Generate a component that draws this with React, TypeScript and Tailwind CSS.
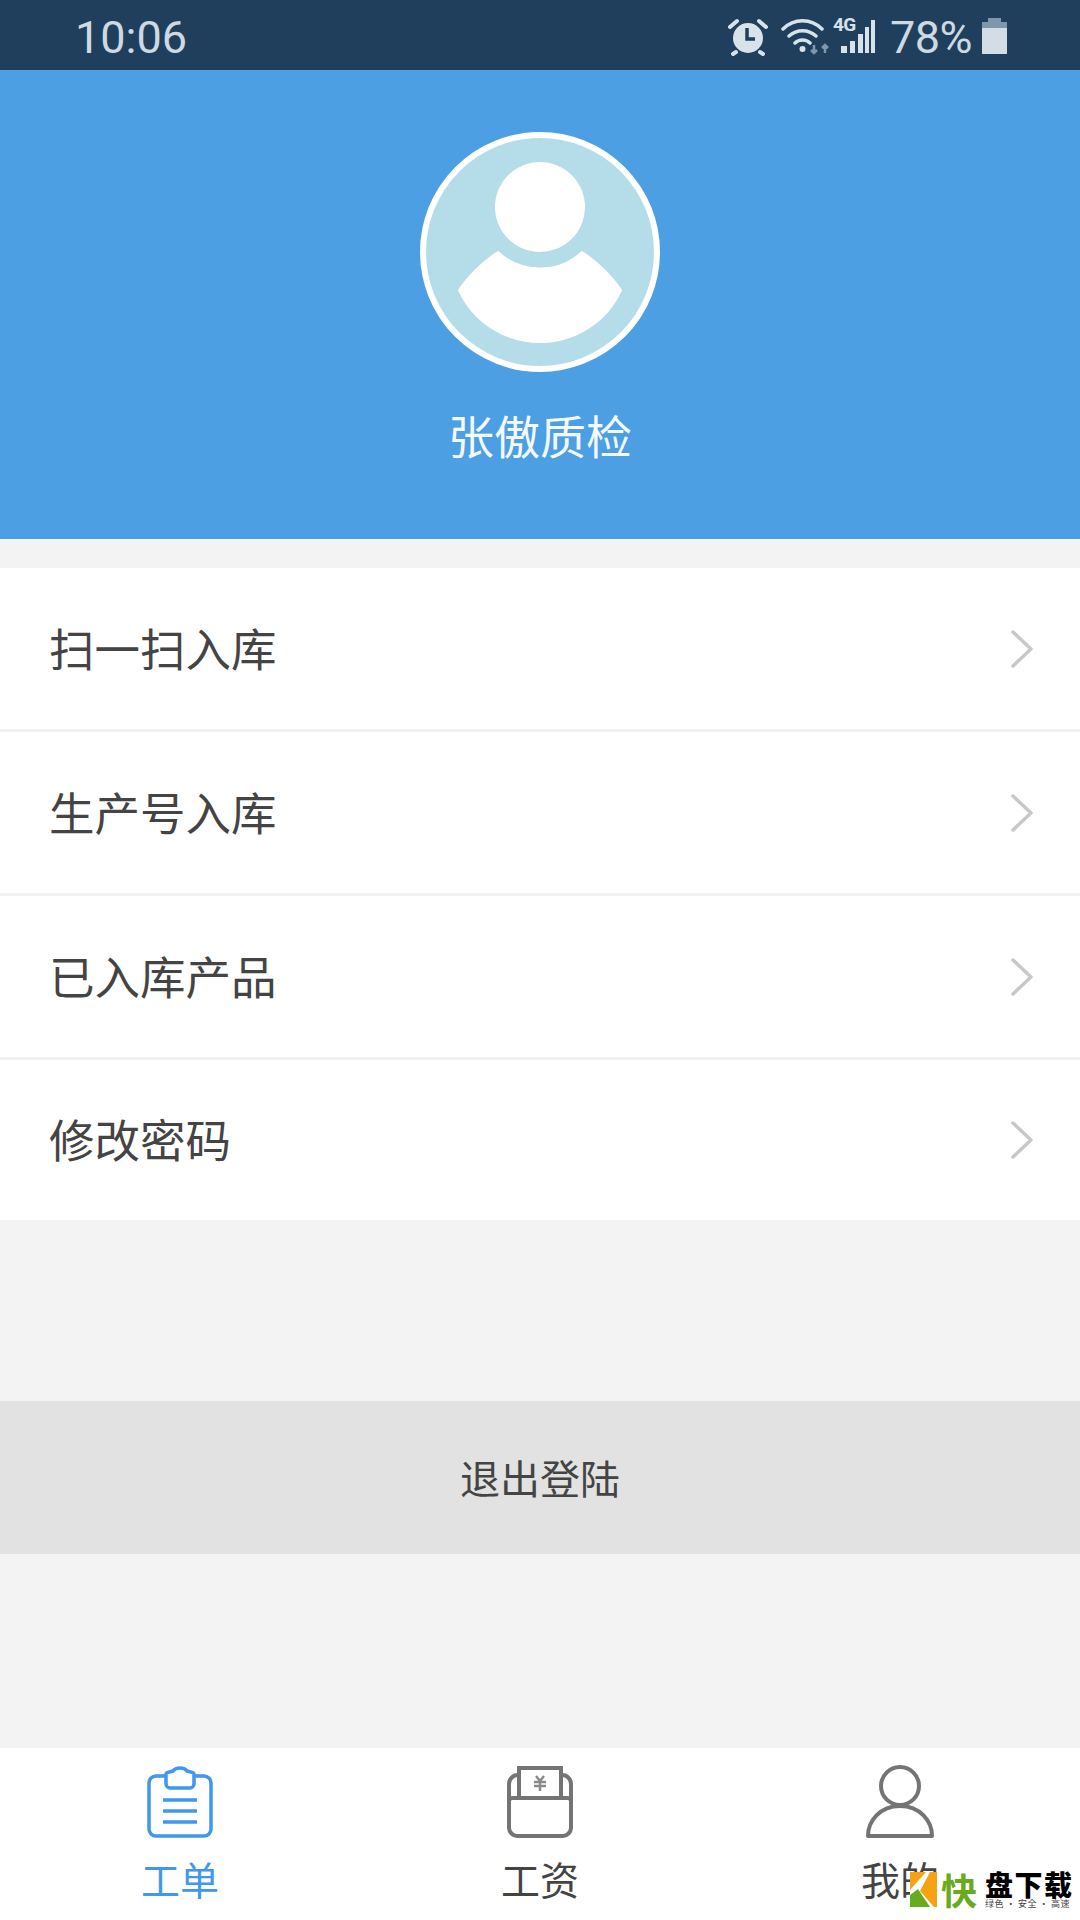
import React from "react";

const CJK = "font-['Noto_Sans_CJK_SC','Noto_Sans',sans-serif]";

const menuItems = ["扫一扫入库", "生产号入库", "已入库产品", "修改密码"];

function StatusIcons() {
  return (
    <div className="flex items-center text-[#ced9e2] translate-y-[2px]">
      {/* alarm */}
      <svg width="40" height="38" viewBox="0 0 40 38" className="mr-[13px]">
        <circle cx="20" cy="20" r="15" fill="#d8e2ea" />
        <path d="M19 10v11h8" fill="none" stroke="#1f3f5c" strokeWidth="3.500" />
        <path d="M2 9 9 3M38 9 31 3M8 34l-3 2M32 34l3 2" fill="none" stroke="#d8e2ea" strokeWidth="4" strokeLinecap="round" />
      </svg>
      {/* wifi */}
      <svg width="50" height="36" viewBox="0 0 50 36">
        <path d="M2 10C13-1 30-1 41 10M8 17c8-7 19-7 27 0M14 24c4-4 11-4 15 0" fill="none" stroke="#d8e2ea" strokeWidth="3.500" strokeLinecap="round" />
        <circle cx="21.500" cy="30" r="3" fill="#d8e2ea" />
        <path d="M33 26v8M30 31l3 3 3-3M44 34v-8M41 29l3-3 3 3" fill="none" stroke="#7f97ab" strokeWidth="2.500" />
      </svg>
      {/* 4G + signal */}
      <div className="relative w-[46px] h-[38px] ml-[2px]">
        <span className="absolute left-0 top-[-3px] font-['Roboto',sans-serif] font-bold text-[19px] leading-[20px] tracking-[-0.5px] text-[#d8e2ea]">4G</span>
        <svg width="46" height="38" viewBox="0 0 46 38" className="absolute inset-0">
          <path d="M8 28h6v7H8zM17 23h5v12h-5zM25 16h5v19h-5zM32 9h4v26h-4zM38 2h4v33h-4z" fill="#d8e2ea" />
        </svg>
      </div>
      <span className="ml-[11px] font-['Roboto',sans-serif] text-[45px] leading-none tracking-[-0.5px]">78%</span>
      {/* battery */}
      <div className="ml-[10px] flex flex-col items-center w-[25px] h-[36px] -translate-y-[1px]">
        <div className="w-[13px] h-[4px] bg-[#7f97ab]" />
        <div className="w-[25px] h-[6px] bg-[#7f97ab]" />
        <div className="w-[25px] flex-1 bg-[#d3dde6]" />
      </div>
    </div>
  );
}

function ClipboardIcon() {
  return (
    <svg width="66" height="72" viewBox="0 0 66 72" fill="none" stroke="#3f97ee" strokeWidth="3.500">
      <path d="M19 10H9a7 7 0 0 0-7 7v46a7 7 0 0 0 7 7h48a7 7 0 0 0 7-7V17a7 7 0 0 0-7-7H47" />
      <path d="M19 8c0-2 4-2 7-3 3-4 11-4 14 0 3 1 7 1 7 3v10c0 2-2 4-4 4H23c-2 0-4-2-4-4z" />
      <path d="M16 34h34M16 45h34M16 56h34" />
    </svg>
  );
}

function WalletIcon() {
  return (
    <svg width="66" height="72" viewBox="0 0 66 72" fill="none" stroke="#747474" strokeWidth="4">
      <path d="M11 9C6 9 2 13 2 18v44c0 4 4 8 8 8h46c4 0 8-4 8-8V18c0-5-4-9-9-9" />
      <path d="M12 33V2h42v31" />
      <path d="M2 35c0-2 2-3 4-3h54c2 0 4 1 4 3" />
      <path d="M29 10l4 5 4-5M27 16h12M27 20h12M33 15v10" strokeWidth="2.500" stroke="#8a8a8a" />
    </svg>
  );
}

function PersonIcon() {
  return (
    <svg width="68" height="74" viewBox="0 0 68 74" fill="none" stroke="#747474" strokeWidth="4">
      <circle cx="34" cy="21" r="19" />
      <path d="M2 71c0-15 12-30 32-30s32 15 32 30z" strokeLinejoin="round" />
    </svg>
  );
}

function TabItem({ icon, label, active }: { icon: React.ReactNode; label: string; active?: boolean }) {
  return (
    <div className="flex flex-col items-center pt-[18px]">
      <div className="h-[72px] flex items-center justify-center">{icon}</div>
      <span className={`mt-[16px] text-[39px] leading-[48px] ${active ? "text-[#3f97ee]" : "text-[#444444]"}`}>{label}</span>
    </div>
  );
}

export default function App() {
  return (
    <div className={`relative w-[1080px] h-[1920px] flex flex-col bg-[#f3f3f3] overflow-hidden ${CJK}`}>
      {/* status bar */}
      <div className="h-[70px] shrink-0 bg-[#1f3f5c] flex items-center justify-between pl-[75px] pr-[73px]">
        <span className="font-['Roboto',sans-serif] text-[45px] leading-none text-[#ced9e2] translate-y-[2px]">10:06</span>
        <StatusIcons />
      </div>

      {/* profile header */}
      <div className="h-[469px] shrink-0 bg-[#4c9fe3] flex flex-col items-center pt-[62px]">
        <svg width="240" height="240" viewBox="0 0 240 240">
          <circle cx="120" cy="120" r="117" fill="#b5dde9" stroke="#ffffff" strokeWidth="6" />
          <circle cx="120" cy="75" r="45" fill="#ffffff" />
          <path d="M39 158C50 142 63 130 78 120A61.500 61.500 0 0 0 162 120C177 130 190 142 201 158A89 89 0 0 1 39 158Z" fill="#ffffff" stroke="#ffffff" strokeWidth="2" strokeLinejoin="round" />
        </svg>
        <span className="mt-[32px] text-[46px] leading-[60px] text-[#f4f9fd]">张傲质检</span>
      </div>

      {/* menu */}
      <div className="mt-[29px] flex flex-col bg-white">
        {menuItems.map((item, i) => (
          <div
            key={item}
            className={`flex items-center justify-between pl-[49px] pr-[46px] ${i < menuItems.length - 1 ? "h-[164px] border-b-[3px] border-[#f1f1f1]" : "h-[160px]"}`}
          >
            <span className="text-[45.5px] leading-none text-[#444444] -translate-y-[1px]">{item}</span>
            <svg width="24" height="40" viewBox="0 0 24 40" fill="none" stroke="#c8c8c8" strokeWidth="3.500" strokeLinecap="round" strokeLinejoin="round">
              <path d="M3 3 21 20 3 37" />
            </svg>
          </div>
        ))}
      </div>

      {/* logout */}
      <div className="mt-[181px] h-[153px] bg-[#e2e2e2] flex items-center justify-center">
        <span className="text-[40px] leading-none text-[#444444] -translate-y-[1px]">退出登陆</span>
      </div>

      {/* tab bar */}
      <div className="mt-auto h-[172px] bg-white grid grid-cols-3">
        <TabItem icon={<ClipboardIcon />} label="工单" active />
        <TabItem icon={<WalletIcon />} label="工资" />
        <TabItem icon={<PersonIcon />} label="我的" />
      </div>

      {/* download site watermark */}
      <div className="absolute left-[910px] top-[1872px] flex items-start">
        <svg width="27" height="35" viewBox="0 0 27 35" className="shrink-0">
          <path d="M0 0h27v35H0z" fill="#ffffff" />
          <path d="M0 0h16L0 18Z" fill="#f5a312" />
          <path d="M20 0h7v35h-3L10 19Z" fill="#f5a312" />
          <path d="M0 23 8 17 20 35H0Z" fill="#6aaa1e" />
        </svg>
        <span className="ml-[4px] w-[36px] text-[36px] leading-[34px] font-bold text-[#6aaa1e]">快</span>
        <div className="ml-[8px] flex flex-col items-start w-[90px]">
          <span className="text-[28px] leading-[25px] font-black text-black tracking-[1.500px]">盘下载</span>
          <span className="mt-[2px] text-[9px] leading-[10px] text-[#444444] whitespace-nowrap tracking-[0.400px]">绿色 · 安全 · 高速</span>
        </div>
      </div>
    </div>
  );
}
